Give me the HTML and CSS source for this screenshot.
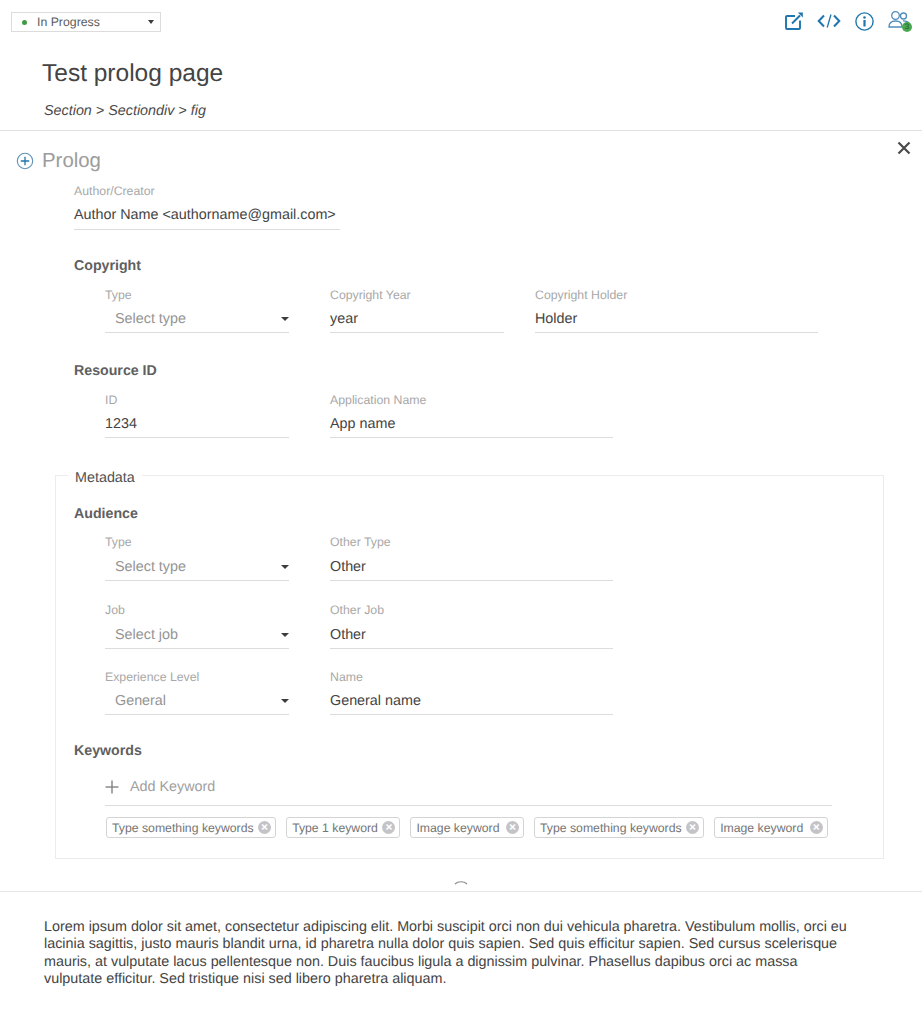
FILE: index.html
```html
<!DOCTYPE html>
<html lang="en">
<head>
<meta charset="utf-8">
<title>Test prolog page</title>
<link rel="stylesheet" href="styles.css">
</head>
<body>
<header class="top">
  <div class="toolbar">
    <div class="status"><span class="dot"></span><span class="status-text">In Progress</span><span class="caret small"></span></div>
    <div class="tools">
      <svg class="tool" width="18" height="18" viewBox="0 0 18 18" fill="none" stroke="#1f76ae" stroke-width="1.900"><path d="M10 4H2a1 1 0 0 0-1 1v11a1 1 0 0 0 1 1h12a1 1 0 0 0 1-1V8.500"/><path d="M7 11.500 15 3.500"/><path d="M12.800 .6h5v5z" fill="#1f76ae" stroke="none"/></svg>
      <svg class="tool" width="24" height="14" viewBox="0 0 24 14" fill="none" stroke="#1f76ae" stroke-width="2"><path d="M7 1.500 1.700 7 7 12.500"/><path d="M17 1.500 22.300 7 17 12.500"/><path d="M14 .5 10.200 13.500" stroke-width="1.300"/></svg>
      <svg class="tool" width="19" height="19" viewBox="0 0 19 19" fill="none" stroke="#1f76ae"><circle cx="9.500" cy="9.500" r="8.600" stroke-width="1.400"/><circle cx="9.500" cy="5.500" r="1.300" fill="#1f76ae" stroke="none"/><path d="M9.500 8v6.500" stroke-width="2.200"/></svg>
      <div class="users">
        <svg width="23" height="22" viewBox="0 0 23 22" fill="none" stroke="#4f8dbb" stroke-width="1.300"><circle cx="7.500" cy="5.500" r="3.800"/><path d="M1 17c0-4 2.500-6 6.500-6s6.500 2 6.500 6z"/><circle cx="15.500" cy="6" r="3"/><path d="M15 10.800c3.500 0 6 1.200 6.800 3.500"/></svg>
        <span class="badge">3</span>
      </div>
    </div>
  </div>
  <h1 class="title">Test prolog page</h1>
  <p class="crumbs">Section &gt; Sectiondiv &gt; fig</p>
</header>

<main class="prolog">
  <button class="close" aria-label="Close">
    <svg width="14" height="14" viewBox="0 0 14 14" stroke="#4a4a4a" stroke-width="2.200"><path d="M1.500 1.500l11 11M12.500 1.500l-11 11"/></svg>
  </button>
  <div class="prolog-head">
    <svg width="18" height="18" viewBox="0 0 18 18" fill="none"><circle cx="9" cy="9" r="7.700" stroke="#5f93b8" stroke-width="1.100"/><path d="M9 4.800v8.400M4.800 9h8.400" stroke="#1f76ae" stroke-width="1.300"/></svg>
    <h2 class="prolog-title">Prolog</h2>
  </div>

  <div class="field author">
    <span class="label">Author/Creator</span>
    <span class="value">Author Name &lt;authorname@gmail.com&gt;</span>
  </div>

  <section class="copyright">
    <h3 class="heading">Copyright</h3>
    <div class="row">
      <div class="field w184"><span class="label">Type</span><span class="value select placeholder">Select type<span class="caret"></span></span></div>
      <div class="field w174"><span class="label">Copyright Year</span><span class="value">year</span></div>
      <div class="field w283"><span class="label">Copyright Holder</span><span class="value">Holder</span></div>
    </div>
  </section>

  <section class="resource">
    <h3 class="heading">Resource ID</h3>
    <div class="row">
      <div class="field w184"><span class="label">ID</span><span class="value">1234</span></div>
      <div class="field w283"><span class="label">Application Name</span><span class="value">App name</span></div>
    </div>
  </section>

  <section class="metadata">
    <div class="legend">Metadata</div>
    <h3 class="heading audience">Audience</h3>
    <div class="row stacked tall">
      <div class="field w184"><span class="label">Type</span><span class="value select placeholder">Select type<span class="caret"></span></span></div>
      <div class="field w283"><span class="label">Other Type</span><span class="value">Other</span></div>
    </div>
    <div class="row stacked tall second">
      <div class="field w184"><span class="label">Job</span><span class="value select placeholder">Select job<span class="caret"></span></span></div>
      <div class="field w283"><span class="label">Other Job</span><span class="value">Other</span></div>
    </div>
    <div class="row stacked">
      <div class="field w184"><span class="label">Experience Level</span><span class="value select placeholder">General<span class="caret"></span></span></div>
      <div class="field w283"><span class="label">Name</span><span class="value">General name</span></div>
    </div>
    <h3 class="heading keywords">Keywords</h3>
    <div class="add">
      <svg width="14" height="14" viewBox="0 0 14 14" stroke="#8a8a8a" stroke-width="1.500"><path d="M7 .5v13M.5 7h13"/></svg>
      <span>Add Keyword</span>
    </div>
    <div class="chips">
      <span class="chip">Type something keywords<span class="x"></span></span>
      <span class="chip">Type 1 keyword<span class="x"></span></span>
      <span class="chip roomy">Image keyword<span class="x"></span></span>
      <span class="chip">Type something keywords<span class="x"></span></span>
      <span class="chip roomy">Image keyword<span class="x"></span></span>
    </div>
  </section>

  <div class="collapse">
    <svg width="14" height="6" viewBox="0 0 14 6" fill="none" stroke="#8c8c8c" stroke-width="1.200"><path d="M1 5c3-3 9-3 12 0"/></svg>
  </div>
</main>

<p class="body-text">Lorem ipsum dolor sit amet, consectetur adipiscing elit. Morbi suscipit orci non dui vehicula pharetra. Vestibulum mollis, orci eu lacinia sagittis, justo mauris blandit urna, id pharetra nulla dolor quis sapien. Sed quis efficitur sapien. Sed cursus scelerisque mauris, at vulputate lacus pellentesque non. Duis faucibus ligula a dignissim pulvinar. Phasellus dapibus orci ac massa vulputate efficitur. Sed tristique nisi sed libero pharetra aliquam.</p>
</body>
</html>
```

FILE: styles.css
```css
* { box-sizing: border-box; }
html, body { margin: 0; padding: 0; }
body {
  width: 922px;
  height: 1024px;
  overflow: hidden;
  background: #fff;
  color: #444;
  font-family: "Liberation Sans", Arial, sans-serif;
  font-size: 14.350px;
  text-rendering: geometricPrecision;
}
.top {
  height: 131px;
  padding: 12px 0 0 0;
  border-bottom: 1px solid #e2e2e2;
}
.toolbar {
  display: flex;
  justify-content: space-between;
  align-items: flex-start;
  padding: 0 11px 0 11px;
}
.status {
  width: 150px;
  height: 20px;
  border: 1px solid #dcdcdc;
  display: flex;
  align-items: center;
  padding: 0 5px 0 10px;
  font-size: 12.300px;
  color: #5c5c5c;
}
.dot {
  width: 5px;
  height: 5px;
  border-radius: 50%;
  background: #3f9c45;
  margin-right: 10px;
}
.status-text { flex: 1; }
.caret {
  display: block;
  width: 0;
  height: 0;
  border-left: 4.500px solid transparent;
  border-right: 4.500px solid transparent;
  border-top: 4.500px solid #3c3c3c;
}
.caret.small {
  border-left-width: 3.500px;
  border-right-width: 3.500px;
  border-top-width: 4px;
  margin-right: 1px;
}
.tools { display: flex; align-items: center; gap: 14px; margin-top: -2px; height: 22px; }
.tool { display: block; }
.users { position: relative; width: 23px; height: 22px; }
.users svg { display: block; }
.badge {
  position: absolute;
  right: -1px;
  bottom: 0;
  width: 10px;
  height: 10px;
  border-radius: 50%;
  background: #4ba850;
  color: #1c5a22;
  font-size: 8px;
  line-height: 10px;
  text-align: center;
}
.title {
  margin: 27px 0 0 42px;
  font-size: 24.500px;
  line-height: 30px;
  font-weight: 400;
  color: #444;
}
.crumbs {
  margin: 13px 0 0 44px;
  font-size: 14.350px;
  line-height: 18px;
  font-style: italic;
  color: #4a4a4a;
}
.prolog {
  position: relative;
  height: 761px;
  border-bottom: 1px solid #e6e6e6;
  padding-top: 18px;
}
.close {
  position: absolute;
  top: 10px;
  right: 11px;
  padding: 0;
  border: 0;
  background: none;
  display: block;
  line-height: 0;
}
.prolog-head {
  display: flex;
  align-items: center;
  height: 24px;
  padding-left: 16px;
  gap: 8px;
}
.prolog-title {
  margin: 0;
  padding-top: 1px;
  font-size: 20.400px;
  font-weight: 400;
  color: #9c9c9c;
}
.field { display: flex; flex-direction: column; }
.label {
  font-size: 12.300px;
  line-height: 14px;
  color: #a8a8a8;
}
.value {
  display: flex;
  justify-content: space-between;
  align-items: center;
  margin-top: 7px;
  height: 24px;
  line-height: 20px;
  padding-bottom: 3px;
  border-bottom: 1px solid #dcdcdc;
  color: #444;
}
.select { padding-left: 10px; padding-right: 0; }
.select .caret { margin-right: 0; }
.placeholder { color: #949494; }
.author { margin: 11px 0 0 74px; width: 266px; }
.author .value { height: 25px; padding-bottom: 5px; }
.heading {
  margin: 0 0 -2px 0;
  font-size: 14.200px;
  line-height: 20px;
  font-weight: 700;
  color: #606060;
}
.copyright { margin: 26px 0 0 74px; }
.resource { margin: 28px 0 0 74px; }
.row {
  display: flex;
  gap: 41px;
  margin: 14px 0 0 31px;
}
.row .w174 { margin-right: -10px; }
.w184 { width: 184px; }
.w174 { width: 174px; }
.w283 { width: 283px; }
.metadata {
  position: relative;
  margin: 37px 38px 0 55px;
  height: 384px;
  border: 1px solid #ececec;
  padding: 28px 0 0 18px;
}
.legend {
  position: absolute;
  top: -6px;
  left: 12px;
  padding: 0 7px;
  background: #fff;
  font-size: 14.350px;
  line-height: 16px;
  color: #505050;
}
.stacked { margin-top: 0; margin-bottom: 22px; }
.audience + .stacked { margin-top: 13px; }
.tall .value { margin-top: 8px; }
.second { margin-bottom: 21px; }
.keywords { margin-top: 26px; }
.add {
  display: flex;
  align-items: center;
  gap: 11px;
  height: 37px;
  margin: 10px 51px 0 31px;
  border-bottom: 1px solid #dcdcdc;
  color: #a0a0a0;
}
.chips {
  display: flex;
  gap: 10px;
  margin: 11px 0 0 32px;
}
.chip {
  display: flex;
  align-items: center;
  height: 21px;
  padding: 0 4px 0 5px;
  border: 1px solid #d4d4d4;
  border-radius: 3px;
  font-size: 12.260px;
  color: #747474;
  white-space: nowrap;
}
.x {
  position: relative;
  width: 13px;
  height: 13px;
  margin-left: 4.500px;
  border-radius: 50%;
  background: #c4c4c8;
}
.roomy .x { margin-left: 6.500px; }
.x::before {
  content: "\00d7";
  position: absolute;
  inset: 0;
  color: #fff;
  font-size: 12px;
  font-weight: 700;
  line-height: 13px;
  text-align: center;
}
.collapse {
  display: flex;
  justify-content: center;
  margin-top: 20px;
  line-height: 0;
}
.body-text {
  margin: 26.500px 0 0 44px;
  width: 810px;
  font-size: 14.350px;
  line-height: 17.500px;
  color: #444;
}
```
